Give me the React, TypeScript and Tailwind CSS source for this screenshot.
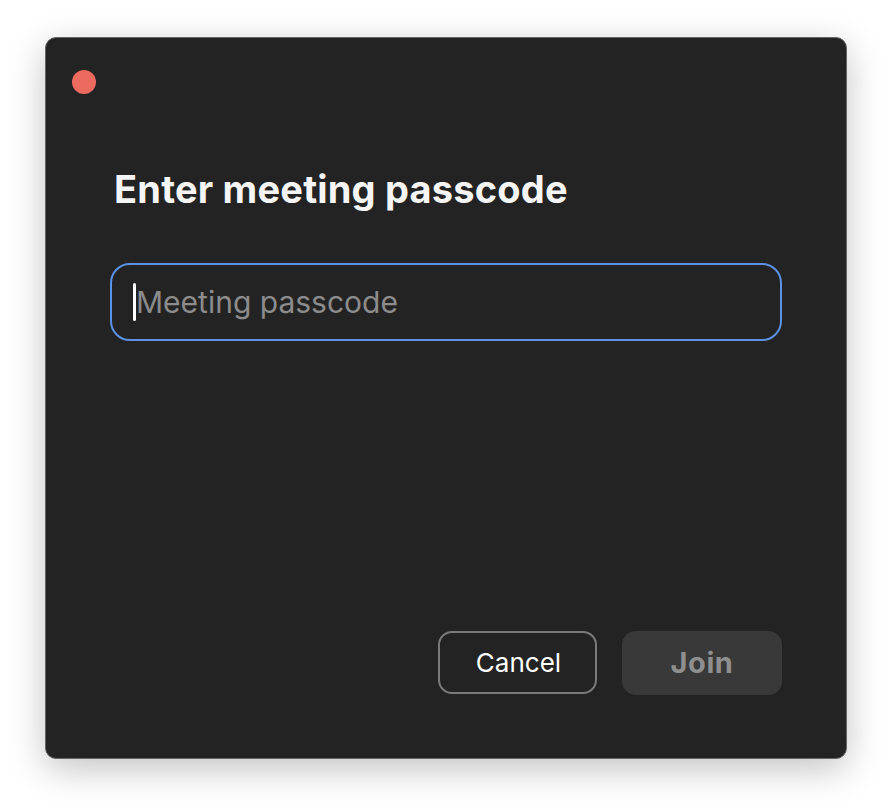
export default function App() {
  return (
    <main
      className="h-[812px] w-[892px] bg-white pl-[45px] pt-[37px]"
      style={{ fontFamily: "Inter, 'Noto Sans', sans-serif" }}
    >
      <div className="flex h-[722px] w-[802px] flex-col rounded-[11px] border border-[#666666] bg-[#232323] shadow-[0_10px_36px_rgba(0,0,0,0.24)]">
        <div className="pl-[26px] pt-[32px]">
          <div className="h-6 w-6 rounded-full bg-[#ed6a5e]" />
        </div>

        <div className="flex flex-1 flex-col px-16 pb-[63px]">
          <h1 className="mt-[73px] pl-[4px] text-[38px] font-bold leading-[44px] tracking-[0.2px] text-[#f5f5f5]">
            Enter meeting passcode
          </h1>

          <div className="mt-[52px] flex h-[78px] items-center rounded-[20px] border-[2.5px] border-[#5c92e5] pl-[21px]">
            <span className="h-[38px] w-[3px] rounded-sm bg-white" />
            <span className="text-[30px] text-[#8c8c8c]">Meeting passcode</span>
          </div>

          <div className="mt-auto flex justify-end gap-[25px]">
            <button className="h-[63px] w-[159px] rounded-[14px] border-2 border-[#7a7a7a] pl-[2px] text-[26px] text-white">
              Cancel
            </button>
            <button className="h-[64px] w-[160px] rounded-[14px] bg-[#393939] text-[29px] font-bold tracking-[0.6px] text-[#8f8f8f]">
              Join
            </button>
          </div>
        </div>
      </div>
    </main>
  );
}
